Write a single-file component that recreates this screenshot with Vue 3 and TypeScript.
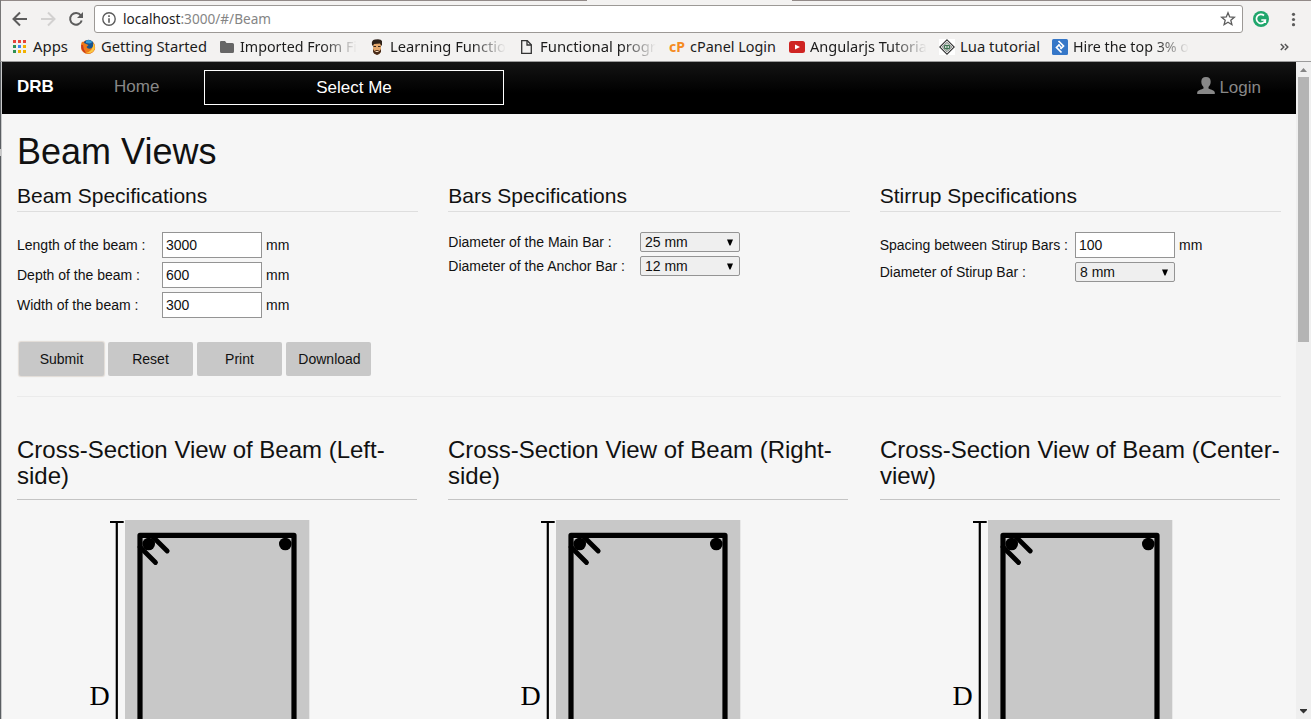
<script setup lang="ts">
import { ref } from 'vue'

interface Bookmark {
  icon: string
  text: string
  slot: number
  iconWidth: number
  textWidth: number
  fade?: boolean
}

const bookmarks: Bookmark[] = [
  { icon: 'apps', text: 'Apps', slot: 67, iconWidth: 20, textWidth: 35 },
  { icon: 'firefox', text: 'Getting Started', slot: 139, iconWidth: 21, textWidth: 106 },
  { icon: 'folder', text: 'Imported From Fi', slot: 151, iconWidth: 21, textWidth: 117, fade: true },
  { icon: 'face', text: 'Learning Functio', slot: 150, iconWidth: 20, textWidth: 116, fade: true },
  { icon: 'page', text: 'Functional progr', slot: 149, iconWidth: 20, textWidth: 116, fade: true },
  { icon: 'cpanel', text: 'cPanel Login', slot: 120, iconWidth: 21, textWidth: 86 },
  { icon: 'video', text: 'Angularjs Tutoria', slot: 150, iconWidth: 21, textWidth: 117, fade: true },
  { icon: 'lua', text: 'Lua tutorial', slot: 113, iconWidth: 21, textWidth: 80 },
  { icon: 'toptal', text: 'Hire the top 3% o', slot: 139, iconWidth: 21, textWidth: 116, fade: true },
]

const dims = ref([
  { label: 'Length of the beam :', value: '3000' },
  { label: 'Depth of the beam :', value: '600' },
  { label: 'Width of the beam :', value: '300' },
])
const bars = [
  { label: 'Diameter of the Main Bar :', value: '25 mm' },
  { label: 'Diameter of the Anchor Bar :', value: '12 mm' },
]
const spacing = ref('100')
const buttons = ['Submit', 'Reset', 'Print', 'Download']
const sections = ['Left-side', 'Right-side', 'Center-view']
</script>

<template>
  <div class="window">
    <header class="chrome">
      <div class="tabline"><i></i><i></i></div>
      <div class="toolbar">
        <svg class="nav-icons" width="92" height="28" viewBox="0 0 92 28" fill="none" stroke-width="2">
          <path d="M27 14H14M20 7.500L13.500 14L20 20.500" stroke="#5c5c5c" />
          <path d="M41 14H54M48 7.500L54.500 14L48 20.500" stroke="#d2d1d0" />
          <path d="M80.800 10.300A5.900 5.900 0 1 0 81.700 15.500" stroke="#5c5c5c" />
          <path d="M83 7V13H77Z" fill="#5c5c5c" />
        </svg>
        <div class="omnibox">
          <svg class="info" width="14" height="14" viewBox="0 0 14 14">
            <circle cx="7" cy="7" r="6.200" fill="none" stroke="#5c5c5c" stroke-width="1.400" />
            <path d="M7 3.300V5M7 6.200V10.800" stroke="#5c5c5c" stroke-width="1.600" />
          </svg>
          <svg class="url" width="150" height="22">
            <text x="0" y="16" textLength="148" lengthAdjust="spacingAndGlyphs">localhost<tspan fill="#858585">:3000/#/Beam</tspan></text>
          </svg>
          <svg class="star" width="16" height="16" viewBox="0 0 16 16">
            <path d="M8 1.800L9.700 6L14.300 6.300L10.800 9.200L11.900 13.700L8 11.200L4.100 13.700L5.200 9.200L1.700 6.300L6.300 6Z" fill="none" stroke="#5c5c5c" stroke-width="1.300" />
          </svg>
        </div>
        <svg class="ext" width="68" height="28" viewBox="0 0 68 28">
          <circle cx="18" cy="14" r="8" fill="#1fa66c" />
          <path d="M21 10.500A4.500 4.500 0 1 0 22.300 15H18.300M22.300 15V18" fill="none" stroke="#fff" stroke-width="1.700" />
          <circle cx="50.500" cy="9.300" r="1.600" fill="#5c5c5c" />
          <circle cx="50.500" cy="14.500" r="1.600" fill="#5c5c5c" />
          <circle cx="50.500" cy="19.700" r="1.600" fill="#5c5c5c" />
        </svg>
      </div>
      <nav class="bookmarks">
        <div v-for="b in bookmarks" :key="b.text" class="bookmark" :style="{ width: b.slot + 'px' }">
          <svg :width="b.iconWidth" height="18" class="bm-icon">
            <g v-if="b.icon === 'apps'">
              <path d="M0 2h3v3H0zM5 2h3v3H5zM10 2h3v3h-3z" fill="#e8443a" />
              <path d="M0 7h3v3H0zM0 12h3v3H0z" fill="#2f9154" />
              <path d="M5 7h3v3H5z" fill="#3b87f0" />
              <path d="M10 7h3v3h-3zM5 12h3v3H5zM10 12h3v3h-3z" fill="#f2b200" />
            </g>
            <g v-else-if="b.icon === 'firefox'">
              <circle cx="8" cy="9" r="7" fill="#e86b1c" />
              <circle cx="8.500" cy="7" r="5.300" fill="#17548f" />
              <path d="M6 2.500Q10 1 12.500 4L10 5.500L6 5Z" fill="#369bd4" />
              <path d="M2 3.500L5 5.500L8.500 7L6.500 9Q8 12 12 10Q14 8 13.500 4.500Q17 10 13 14Q7 18 2 12.500Q0 8 2 3.500Z" fill="#ed7918" />
              <path d="M13.500 5Q16.500 10 12.500 14Q9 16 6 15Q13 13 13.500 5Z" fill="#f9c843" />
              <path d="M1.200 7Q1 13 6 15.300Q3 11 3 7Z" fill="#c73821" />
            </g>
            <path v-else-if="b.icon === 'folder'" d="M2 3H6L7.500 5H13.500Q15 5 15 6.500V13.500Q15 15 13.500 15H2.500Q1 15 1 13.500V4Q1 3 2 3Z" fill="#666" />
            <g v-else-if="b.icon === 'face'">
              <path d="M3 5H11V12Q10 16.500 7 16.500Q4 16 3 12Z" fill="#e5a86c" />
              <path d="M2 7Q1 2 5 1.500Q11 .5 12 3V7.500H11L10 5.500L4 6L3 8Z" fill="#2e2118" />
              <path d="M3 11L4.500 13Q7 11 9.500 13L11 11V14Q9 17 7 17Q3.500 16 3 14Z" fill="#4a2c18" />
              <path d="M3.500 8.500H6M8 8.500H10.500" stroke="#38261a" stroke-width="1.200" />
              <path d="M5.500 13.500H8.500" stroke="#f5dcc0" />
            </g>
            <g v-else-if="b.icon === 'page'" fill="none" stroke="#333" stroke-width="1.300">
              <path d="M1.700 2.700H7.300L11.300 6.700V15.300H1.700Z" />
              <path d="M7 2.700V7H11.300" />
            </g>
            <text v-else-if="b.icon === 'cpanel'" x="0" y="13.500" class="cp" textLength="16" lengthAdjust="spacingAndGlyphs">cP</text>
            <g v-else-if="b.icon === 'video'">
              <rect x="0" y="3" width="16" height="12" rx="2.500" fill="#cf2422" />
              <path d="M6 6.500L11 9L6 11.500Z" fill="#fff" />
            </g>
            <g v-else-if="b.icon === 'lua'">
              <rect width="16" height="16" y="1" fill="#fff" />
              <path d="M8 1.800L15.200 9L8 16.200L.8 9Z" fill="#fff" stroke="#333" stroke-width="1.100" />
              <path d="M8 4.300L12.700 9L8 13.700L3.300 9Z" fill="#cbd8ce" stroke="#555" stroke-width=".8" />
              <path d="M5.500 7.500H10.500M5.500 10.500H10.500M5.500 7.500V10.500M10.500 7.500V10.500M8 7V12" stroke="#3f7352" stroke-width="1" />
            </g>
            <g v-else>
              <rect width="16" height="16" y="1" rx="1.500" fill="#3577c8" />
              <path d="M6.500 3L11.500 8L8.500 11" fill="none" stroke="#fff" stroke-width="1.700" />
              <path d="M7.500 7L4.500 10L9.500 15" fill="none" stroke="#fff" stroke-width="1.700" transform="translate(0 -.5)" />
              <path d="M6.500 6.500L9.500 10" stroke="#fff" stroke-width="1.400" />
            </g>
          </svg>
          <svg class="bm-text" :class="{ fade: b.fade }" :width="b.textWidth" height="22">
            <text x="0" y="16" :textLength="b.textWidth" lengthAdjust="spacingAndGlyphs">{{ b.text }}</text>
          </svg>
        </div>
        <svg class="more" width="9" height="8" viewBox="0 0 9 8" fill="none" stroke="#555" stroke-width="1.500">
          <path d="M.8 1L3.800 4L.8 7M4.800 1L7.800 4L4.800 7" />
        </svg>
      </nav>
    </header>

    <div class="viewport">
      <div class="edge"><i></i></div>
      <main class="page">
        <div class="navbar">
          <b class="brand">DRB</b>
          <a class="home">Home</a>
          <button class="picker">Select Me</button>
          <a class="login">
            <svg width="18" height="17" viewBox="0 0 18 17">
              <path d="M9 0C12.300 0 13.700 1.800 13.700 4.800C13.700 7.500 12.500 9 11.500 10V11.500C13 12.500 17.800 13.300 17.800 15.500V17H.2V15.500C.2 13.300 5 12.500 6.500 11.500V10C5.500 9 4.300 7.500 4.300 4.800C4.300 1.800 5.700 0 9 0Z" fill="#888" />
            </svg>
            <span>Login</span>
          </a>
        </div>
        <h1>Beam Views</h1>
        <div class="specs">
          <section class="dims">
            <h2>Beam Specifications</h2>
            <div v-for="d in dims" :key="d.label" class="row tall">
              <label>{{ d.label }}</label>
              <input v-model="d.value" type="text" />
              <span>mm</span>
            </div>
          </section>
          <section class="bars">
            <h2>Bars Specifications</h2>
            <div v-for="b in bars" :key="b.label" class="row">
              <label>{{ b.label }}</label>
              <div class="select">{{ b.value }}<svg width="8" height="7" viewBox="0 0 8 7"><path d="M1 .5H7L4.500 6.500H3.500Z" /></svg></div>
            </div>
          </section>
          <section class="stirrup">
            <h2>Stirrup Specifications</h2>
            <div class="row tall">
              <label>Spacing between Stirup Bars :</label>
              <input v-model="spacing" type="text" />
              <span>mm</span>
            </div>
            <div class="row">
              <label>Diameter of Stirup Bar :</label>
              <div class="select">8 mm<svg width="8" height="7" viewBox="0 0 8 7"><path d="M1 .5H7L4.500 6.500H3.500Z" /></svg></div>
            </div>
          </section>
        </div>
        <div class="actions">
          <button v-for="b in buttons" :key="b" :class="{ focused: b === 'Submit' }">{{ b }}</button>
        </div>
        <hr />
        <div class="views">
          <section v-for="s in sections" :key="s">
            <h3>Cross-Section View of Beam ({{ s }})</h3>
            <svg class="beam" width="240" height="219" viewBox="0 0 240 219">
              <rect x="45" y="20" width="184.300" height="220" fill="#c8c8c8" />
              <path d="M30 22H43.700" stroke="#000" stroke-width="2" />
              <path d="M36.800 22V230" stroke="#000" stroke-width="2.200" />
              <path d="M60 230V35.400H214V230" fill="none" stroke="#000" stroke-width="5.200" stroke-linejoin="round" />
              <circle cx="68.700" cy="44" r="6.300" />
              <circle cx="205.300" cy="44" r="6.300" />
              <path d="M71.500 35.500L87.200 51M60 47L75.500 62.500" stroke="#000" stroke-width="4.800" stroke-linecap="round" />
              <text x="9.500" y="205" class="dim">D</text>
            </svg>
          </section>
        </div>
      </main>
      <aside class="scrollbar">
        <svg width="15" height="15" viewBox="0 0 15 15"><path d="M4 10L7.500 6L11 10Z" fill="#858585" /></svg>
        <div class="thumb"></div>
        <svg class="down" width="15" height="15" viewBox="0 0 15 15"><path d="M4 5H11V6L7.500 9.500L4 6Z" fill="#333" /></svg>
      </aside>
    </div>
  </div>
</template>

<style>
body { margin: 0; overflow: hidden; }
</style>

<style scoped>
* { box-sizing: border-box; }
.window { width: 1311px; height: 719px; overflow: hidden; display: flex; flex-direction: column; font: 14px/20px "Liberation Sans", Arial, sans-serif; color: #111; background: #f6f6f6; }
svg { display: block; flex: none; }

.chrome { height: 62px; flex: none; background: #f3f2f1; border-bottom: 1px solid #9b9b9b; border-left: 1px solid #777; }
.tabline { height: 1px; display: flex; justify-content: space-between; }
.tabline i { background: #928a88; width: 586px; }
.tabline i + i { width: 519px; }
.toolbar { display: flex; padding-top: 4px; height: 32px; }
.nav-icons { margin-left: -1px; margin-right: 2px; }
.omnibox { width: 1149px; height: 28px; background: #fff; border: 1px solid #9c9996; border-radius: 3px; display: flex; align-items: center; padding: 0 7px; }
.url { margin-left: 7px; }
.url text, .bm-text text { font: 14px "Noto Sans", "Open Sans", sans-serif; fill: #1c1c1c; }
.star { margin-left: auto; margin-right: -1px; }
.bookmarks { display: flex; align-items: center; height: 28px; padding-left: 12px; }
.bookmark { display: flex; align-items: center; flex: none; }
.bm-icon, .bm-text { overflow: visible; }
.bm-text.fade { -webkit-mask-image: linear-gradient(to right, #000 70%, transparent 100%); mask-image: linear-gradient(to right, #000 70%, transparent 100%); }
.cp { font: bold 13.5px "Noto Sans", sans-serif; fill: #f58b1f; }
.more { margin-left: 89px; }

.viewport { flex: 1; display: flex; min-height: 0; }
.edge { width: 2px; flex: none; background: #5a5e62; border-right: 1px solid #c9cacb; padding-top: 87px; }
.edge i { display: block; height: 7px; background: #c9c9c9; }
.page { width: 1294px; flex: none; overflow: hidden; background: #f6f6f6; }
.navbar { height: 52px; background: linear-gradient(#141414, #000 60%); display: flex; align-items: flex-start; font-size: 17px; line-height: 20px; color: #888; padding: 8px 35px 0 15px; }
.brand { color: #fff; width: 97px; padding-top: 7px; }
.home { width: 90px; padding-top: 7px; }
.picker { width: 300px; height: 35px; border: 1px solid #fff; background: transparent; color: #fff; font: inherit; padding: 0; }
.login { margin-left: auto; display: flex; gap: 4px; padding-top: 7px; }
.login span { padding-top: 1px; }

h1 { font-size: 36px; line-height: 40px; font-weight: 400; margin: 18px 0 0 15px; }
.specs { display: grid; grid-template-columns: repeat(3, 1fr); margin-top: 12px; height: 134px; }
.specs section { padding: 0 15px; }
h2 { margin: 0 0 20px; height: 28px; font-size: 21px; line-height: 24px; font-weight: 400; border-bottom: 1px solid #dedede; }
.row { display: flex; align-items: center; height: 20px; margin-bottom: 4px; }
.row.tall { height: 26px; }
.row label { width: 145px; flex: none; white-space: nowrap; }
.bars label { width: 191.670px; }
.stirrup label { width: 195.330px; }
.row input { width: 100px; height: 26px; border: 1px solid #949494; background: #fff; padding: 0 3px; font: inherit; color: #111; border-radius: 0; outline: none; }
.row span { margin-left: 4px; }
.select { width: 100px; height: 20px; border: 1px solid #949494; border-radius: 2px; background: #efefef; padding: 0 5px 0 4px; display: flex; align-items: center; justify-content: space-between; line-height: 18px; }

.actions { display: flex; gap: 4px; margin: 24px 0 0 17px; }
.actions button { width: 85px; height: 34px; border: 0; border-radius: 2px; background: #c8c8c8; font: inherit; color: #111; padding: 0; }
.actions button:last-child { padding-left: 2px; }
.actions .focused { box-shadow: 0 0 1px 1px #e2dcd6; }
hr { border: 0; border-top: 1px solid #ebebeb; margin: 20px 15px 0; }
.views { display: grid; grid-template-columns: 431px 432px 431px; margin-top: 40px; }
.views section { padding-left: 15px; }
h3 { font-size: 24px; line-height: 26px; font-weight: 400; margin: 0; width: 401px; height: 63px; position: relative; }
h3::after { content: ""; position: absolute; left: 0; bottom: 0; width: 400px; height: 1px; background: #c4c4c4; }
.beam { margin-left: 63px; }
.dim { font: 28px "Liberation Serif", "Times New Roman", serif; }

.scrollbar { width: 15px; background: #efefef; display: flex; flex-direction: column; }
.thumb { width: 11px; height: 265px; margin-left: 2px; background: #b4b4b4; }
.down { margin-top: auto; }
</style>
